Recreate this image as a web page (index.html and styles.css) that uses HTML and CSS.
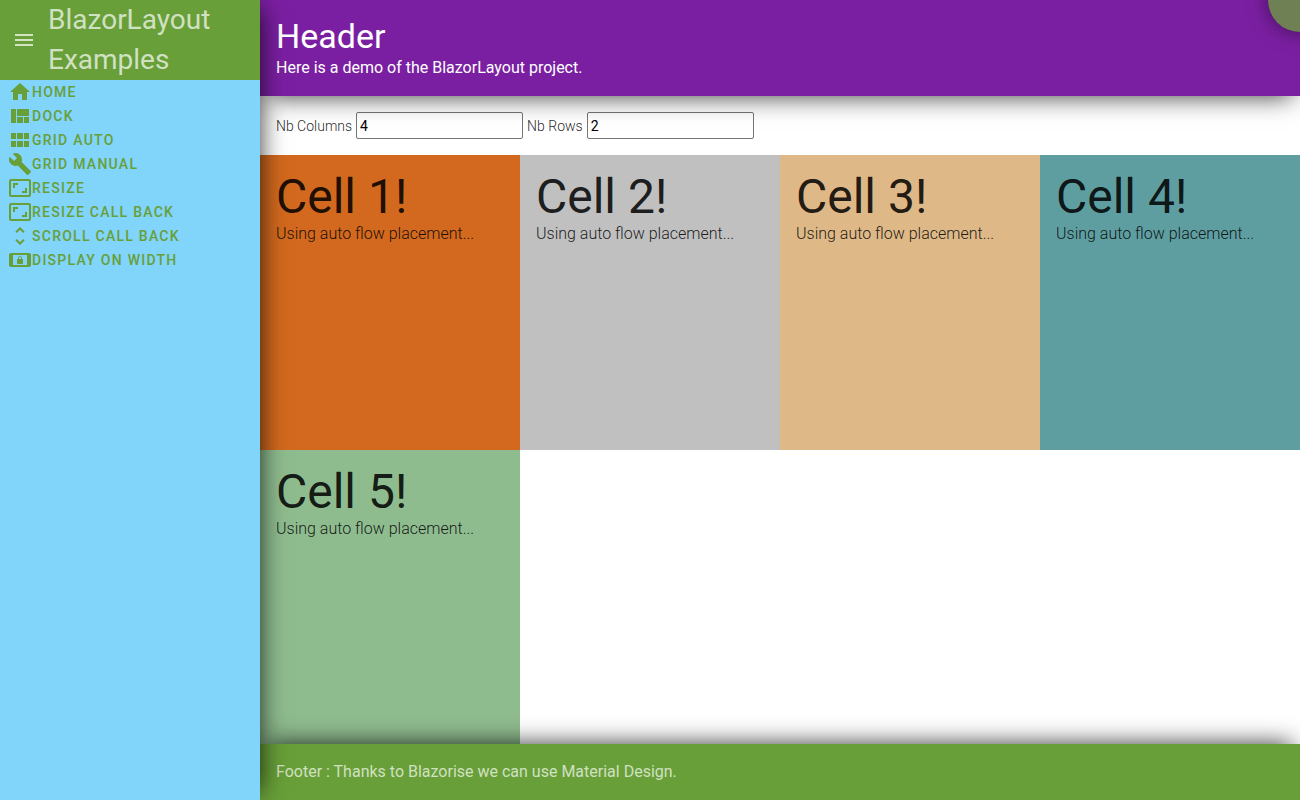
FILE: index.html
```html
<!DOCTYPE html>
<html lang="en">
<head>
<meta charset="utf-8">
<title>BlazorLayout Examples</title>
<link rel="stylesheet" href="styles.css">
</head>
<body>
<div class="layout">
  <aside class="sidebar">
    <div class="brand">
      <button class="menu-button" type="button" aria-label="Toggle menu"><svg class="icon" viewBox="0 0 24 24"><path d="M3 18h18v-2H3v2zm0-5h18v-2H3v2zm0-7v2h18V6H3z"/></svg></button>
      <span class="brand-title">BlazorLayout Examples</span>
    </div>
    <nav class="nav">
      <a class="nav-link" href="#"><svg class="icon" viewBox="0 0 24 24"><path d="M10 20v-6h4v6h5v-8h3L12 3 2 12h3v8z"/></svg>Home</a>
      <a class="nav-link" href="#"><svg class="icon" viewBox="0 0 24 24"><path d="M9 19h6v-6H9v6zm-6 0h5V5H3v14zm13 0h5v-6h-5v6zM9 5v7h12V5H9z"/></svg>Dock</a>
      <a class="nav-link" href="#"><svg class="icon" viewBox="0 0 24 24"><path d="M3 11h5V5H3v6zm0 8h5v-6H3v6zm6 0h6v-6H9v6zm7 0h5v-6h-5v6zm-7-8h6V5H9v6zm7-6v6h5V5h-5z"/></svg>Grid Auto</a>
      <a class="nav-link" href="#"><svg class="icon" viewBox="0 0 24 24"><path d="M22.700 19l-9.100-9.100c.9-2.300.4-5-1.500-6.900-2-2-5-2.400-7.400-1.300L9 6 6 9 1.600 4.700C.4 7.100.9 10.100 2.900 12.100c1.900 1.900 4.600 2.400 6.900 1.500l9.100 9.100c.4.4 1 .4 1.400 0l2.300-2.300c.5-.4.5-1.100.1-1.400z"/></svg>Grid Manual</a>
      <a class="nav-link" href="#"><svg class="icon" viewBox="0 0 24 24"><path d="M19 12h-2v3h-3v2h5v-5zM7 9h3V7H5v5h2V9zm14-6H3c-1.100 0-2 .9-2 2v14c0 1.100.9 2 2 2h18c1.100 0 2-.9 2-2V5c0-1.100-.9-2-2-2zm0 16.010H3V4.990h18v14.020z"/></svg>Resize</a>
      <a class="nav-link" href="#"><svg class="icon" viewBox="0 0 24 24"><path d="M19 12h-2v3h-3v2h5v-5zM7 9h3V7H5v5h2V9zm14-6H3c-1.100 0-2 .9-2 2v14c0 1.100.9 2 2 2h18c1.100 0 2-.9 2-2V5c0-1.100-.9-2-2-2zm0 16.010H3V4.990h18v14.020z"/></svg>Resize Call Back</a>
      <a class="nav-link" href="#"><svg class="icon" viewBox="0 0 24 24"><path d="M12 5.830L15.170 9l1.410-1.410L12 3 7.410 7.590 8.830 9 12 5.830zm0 12.340L8.830 15l-1.410 1.410L12 21l4.590-4.590L15.170 15 12 18.170z"/></svg>Scroll Call Back</a>
      <a class="nav-link" href="#"><svg class="icon" viewBox="0 0 24 24"><path d="M21 5H3c-1.100 0-2 .9-2 2v10c0 1.100.9 2 2 2h18c1.100 0 2-.9 2-2V7c0-1.100-.9-2-2-2zm-2 12H5V7h14v10zm-9-1h4c.55 0 1-.45 1-1v-3c0-.55-.45-1-1-1v-1c0-1.110-.9-2-2-2s-2 .9-2 2v1c-.55 0-1 .45-1 1v3c0 .55.45 1 1 1zm.8-6c0-.66.54-1.200 1.200-1.200s1.200.54 1.200 1.200v1h-2.400v-1z"/></svg>Display On Width</a>
    </nav>
  </aside>
  <div class="page">
    <header class="header">
      <h1 class="header-title">Header</h1>
      <p class="header-text">Here is a demo of the BlazorLayout project.</p>
      <button class="corner-button" type="button" aria-label="Open"></button>
    </header>
    <main class="main">
      <form class="options">
        <label for="columns">Nb Columns</label>
        <input class="field" id="columns" type="text" value="4">
        <label for="rows">Nb Rows</label>
        <input class="field" id="rows" type="text" value="2">
      </form>
      <div class="grid">
        <section class="cell chocolate"><h2 class="cell-title">Cell 1!</h2><p class="cell-text">Using auto flow placement...</p></section>
        <section class="cell silver"><h2 class="cell-title">Cell 2!</h2><p class="cell-text">Using auto flow placement...</p></section>
        <section class="cell wood"><h2 class="cell-title">Cell 3!</h2><p class="cell-text">Using auto flow placement...</p></section>
        <section class="cell cadet"><h2 class="cell-title">Cell 4!</h2><p class="cell-text">Using auto flow placement...</p></section>
        <section class="cell sea"><h2 class="cell-title">Cell 5!</h2><p class="cell-text">Using auto flow placement...</p></section>
      </div>
    </main>
    <footer class="footer">Footer : Thanks to Blazorise we can use Material Design.</footer>
  </div>
</div>
</body>
</html>
```
FILE: styles.css
```css
* { box-sizing: border-box; }
body {
  margin: 0;
  font: 300 16px/24px Roboto, sans-serif;
  color: rgba(0, 0, 0, 0.87);
  background: #fff;
}
h1, h2, p { margin: 0; }
.layout {
  display: flex;
  min-height: 100vh;
  overflow: hidden;
}
.icon {
  display: block;
  flex: none;
  width: 24px;
  height: 24px;
  fill: currentColor;
}
.sidebar {
  position: relative;
  z-index: 3;
  flex: 0 0 20%;
  background: #81d4fa;
  box-shadow: 8px 0 24px -8px rgba(0, 0, 0, 0.8);
}
.brand {
  display: flex;
  align-items: center;
  gap: 12px;
  padding-left: 12px;
  background: #689f38;
  color: rgba(255, 255, 255, 0.7);
}
.menu-button {
  padding: 0;
  border: 0;
  background: none;
  color: inherit;
}
.brand-title {
  font-size: 28px;
  font-weight: 400;
  line-height: 40px;
}
.nav {
  display: flex;
  flex-direction: column;
  padding: 0 8px;
}
.nav-link {
  display: flex;
  color: #689f38;
  font-size: 14px;
  font-weight: 500;
  letter-spacing: 0.09em;
  text-decoration: none;
  text-transform: uppercase;
}
.page {
  flex: 1;
  min-width: 0;
  display: flex;
  flex-direction: column;
}
.header {
  position: relative;
  z-index: 2;
  padding: 16px;
  background: #7b1fa2;
  color: #fff;
  box-shadow: 0 8px 24px -8px rgba(0, 0, 0, 0.8);
}
.header-title {
  font-size: 34px;
  font-weight: 400;
  line-height: 40px;
}
.header-text { font-weight: 400; }
.corner-button {
  position: absolute;
  top: -32px;
  right: -32px;
  width: 64px;
  height: 64px;
  border: 0;
  border-radius: 50%;
  background: #6f8054;
  box-shadow: 0 0 20px rgba(0, 0, 0, 0.5);
}
.main {
  flex: 1;
  display: flex;
  flex-direction: column;
}
.options {
  display: flex;
  flex-wrap: wrap;
  align-items: center;
  gap: 4px;
  padding: 16px;
  font-size: 14px;
}
.field {
  width: 167px;
  height: 27px;
  padding: 0 3px;
  border: 1px solid #767676;
  border-radius: 2px;
  background: transparent;
  color: #000;
  font: 400 14px/20px Roboto, sans-serif;
}
.grid {
  flex: 1;
  display: grid;
  grid-template-columns: repeat(4, 1fr);
  grid-template-rows: repeat(2, 1fr);
}
.cell { padding: 16px; }
.cell-title {
  font-size: 48px;
  font-weight: 400;
  line-height: 51px;
}
.chocolate { background: #d2691e; }
.silver { background: #c0c0c0; }
.wood { background: #deb887; }
.cadet { background: #5f9ea0; }
.sea { background: #8fbc8f; }
.footer {
  position: relative;
  z-index: 2;
  padding: 16px;
  background: #689f38;
  color: rgba(255, 255, 255, 0.7);
  font-weight: 400;
  box-shadow: 0 -8px 24px -8px rgba(0, 0, 0, 0.8);
}
```
